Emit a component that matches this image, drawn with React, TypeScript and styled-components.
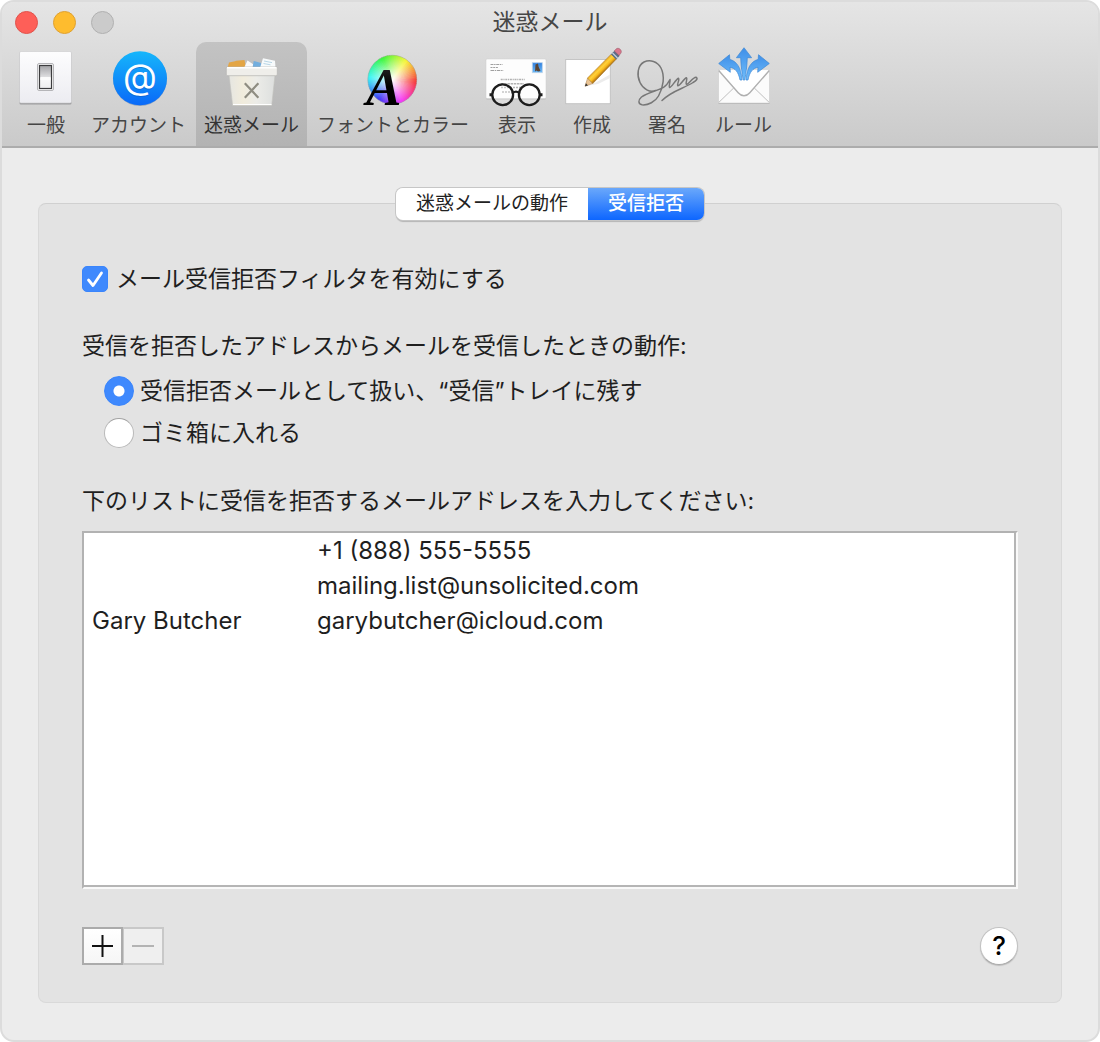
import React, { useState } from "react";
import styled, { createGlobalStyle } from "styled-components";

const GlobalStyle = createGlobalStyle`
  *, *::before, *::after { box-sizing: border-box; }
  body {
    margin: 0;
    background: #fff;
    color: #1f1f1f;
    font-family: Inter, "Noto Sans CJK JP", sans-serif;
    font-size: 23px;
    line-height: 30px;
  }
  button, input { font: inherit; color: inherit; margin: 0; padding: 0; }
`;

const Window = styled.div`
  display: flex;
  flex-direction: column;
  min-height: 100vh;
  border: 2px solid #dcdcdc;
  border-radius: 14px;
  background: #ececec;
  overflow: hidden;
`;

const Header = styled.header`
  background: linear-gradient(#e5e5e5, #cacaca);
  border-bottom: 2px solid #acacac;
`;

const TitleBar = styled.div`
  display: grid;
  grid-template-columns: 1fr auto 1fr;
  align-items: center;
  height: 40px;
  padding: 0 13px;
`;

const Title = styled.h1`
  margin: 0;
  color: #464646;
  font-size: 23px;
  font-weight: 400;
  line-height: 30px;
`;

const TrafficLights = styled.div`
  display: flex;
  gap: 15px;
`;

const TrafficLight = styled.button<{ $fill: string; $edge: string }>`
  width: 23px;
  height: 23px;
  border: 1px solid ${(p) => p.$edge};
  border-radius: 50%;
  background: ${(p) => p.$fill};
`;

const Toolbar = styled.nav`
  display: flex;
  gap: 2px;
  padding: 0 9px;
`;

const ToolButton = styled.button<{ $active?: boolean }>`
  display: flex;
  flex-direction: column;
  align-items: center;
  gap: 7px;
  padding: 5px 8px 8px;
  border: 0;
  border-radius: 10px 10px 0 0;
  background: ${(p) => (p.$active ? "linear-gradient(#c3c3c3, #b3b3b3)" : "none")};
  color: ${(p) => (p.$active ? "#333" : "#454545")};
  font-size: 19px;
  line-height: 24px;
  white-space: nowrap;

  svg { display: block; overflow: visible; }
`;

const Main = styled.main`
  flex: 1;
  display: flex;
  flex-direction: column;
  align-items: stretch;
  padding: 40px 36px 37px;
`;

const Tabs = styled.div`
  z-index: 1;
  display: flex;
  align-self: center;
  margin-bottom: -17px;
  border-radius: 7px;
  box-shadow: 0 0 0 1px #c6c6c6, 0 2px 1px #b4b4b4;
`;

const Tab = styled.button<{ $selected: boolean }>`
  height: 32px;
  padding: 0 20px;
  border: 0;
  background: ${(p) => (p.$selected ? "linear-gradient(#6aa8fb, #0d66ff)" : "#fff")};
  color: ${(p) => (p.$selected ? "#fff" : "#222")};
  font-size: 19px;
  font-weight: ${(p) => (p.$selected ? 500 : 400)};
  line-height: 32px;

  &:first-child { border-radius: 7px 0 0 7px; }
  &:last-child { border-radius: 0 7px 7px 0; }
`;

const Panel = styled.section`
  flex: 1;
  display: flex;
  flex-direction: column;
  padding: 60px 43px 37px;
  border: 1px solid #d9d9d9;
  border-top-color: #d0d0d0;
  border-radius: 8px;
  background: #e3e3e3;
`;

const Option = styled.label<{ $gap: number }>`
  display: flex;
  align-items: center;
  gap: ${(p) => p.$gap}px;
`;

const Mark = styled.span`
  display: grid;
  place-items: center;

  > * { grid-area: 1 / 1; }
  svg { pointer-events: none; }
`;

const CheckInput = styled.input`
  appearance: none;
  width: 26px;
  height: 26px;
  border: 1px solid #b0b0b0;
  border-radius: 5px;
  background: #fff;

  &:checked { border-color: #3a85fc; background: #3f89fd; }
`;

const RadioInput = styled.input`
  appearance: none;
  width: 30px;
  height: 30px;
  border: 1px solid #b9b9b9;
  border-top-color: #a2a2a2;
  border-radius: 50%;
  background: #fff;

  &:checked {
    border-color: #3a85fc;
    background: radial-gradient(circle, #fff 5px, #3f89fd 6px);
  }
`;

const RadioGroup = styled.fieldset`
  display: flex;
  flex-direction: column;
  gap: 12px;
  margin: 37px 0 38px;
  padding: 0 0 0 22px;
  border: 0;
`;

const Legend = styled.legend`
  margin: 0 0 15px -22px;
  padding: 0;
`;

const Caption = styled.p`
  margin: 0 0 15px;
`;

const AddressBox = styled.div`
  flex: 1;
  min-height: 200px;
  border: 2px solid;
  border-color: #b2b2b2 #f9f9f9 #f9f9f9 #b2b2b2;
  background: #fff;
  box-shadow: inset -2px -2px #b5b5b5;
`;

const AddressTable = styled.table`
  width: 100%;
  table-layout: fixed;
  border-collapse: collapse;
  font-size: 24px;

  td { height: 35px; padding: 0 0 0 8px; line-height: 34px; }
  td:first-child { width: 225px; }
`;

const Footer = styled.div`
  display: flex;
  align-items: center;
  justify-content: space-between;
  margin-top: 38px;
`;

const ListButtons = styled.div`
  display: flex;
`;

const ListButton = styled.button`
  display: grid;
  place-items: center;
  width: 41px;
  height: 38px;
  border: 2px solid #ababab;
  background: linear-gradient(#fff, #f6f6f6);
  color: #111;

  &:disabled {
    border-color: #c8c8c8;
    border-left-width: 1px;
    background: #efefef;
    color: #b3b3b3;
  }
`;

const HelpButton = styled.button`
  width: 38px;
  height: 38px;
  border: 1px solid #c2c2c2;
  border-bottom-color: #aaa;
  border-radius: 50%;
  background: #fff;
  box-shadow: 0 1px 1px #bdbdbd;
  color: #000;
  font-size: 26px;
  font-weight: 500;
  line-height: 36px;
`;

function GeneralIcon() {
  return (
    <svg width="54" height="60" aria-hidden="true">
      <defs>
        <linearGradient id="plate" x1="0" y1="0" x2="0" y2="1">
          <stop offset="0" stopColor="#fdfdfe" />
          <stop offset="1" stopColor="#ececf1" />
        </linearGradient>
        <linearGradient id="rocker" x1="0" y1="0" x2="0" y2="1">
          <stop offset="0" stopColor="#a3a3a6" />
          <stop offset="0.48" stopColor="#dcdcde" />
          <stop offset="0.52" stopColor="#fbfbfb" />
          <stop offset="1" stopColor="#ededee" />
        </linearGradient>
      </defs>
      <rect x="0.5" y="5" width="52" height="52.5" rx="1.5" fill="#9b9b9d" />
      <rect x="0.5" y="4.5" width="52" height="51.5" rx="1.5" fill="url(#plate)" stroke="#c9c9cb" strokeWidth="0.6" />
      <rect x="18.5" y="16.5" width="16" height="27" rx="1.5" fill="#f5f5f6" stroke="#b5b5b8" strokeWidth="1" />
      <rect x="20.5" y="18.5" width="12" height="23" fill="url(#rocker)" stroke="#3c3c3e" strokeWidth="1.2" />
      <path d="M21.2 32h10.6" stroke="#fff" strokeWidth="1" />
    </svg>
  );
}

function AccountIcon() {
  return (
    <svg width="55" height="60" aria-hidden="true">
      <defs>
        <linearGradient id="account" x1="0" y1="0" x2="0" y2="1">
          <stop offset="0" stopColor="#16b6fb" />
          <stop offset="1" stopColor="#0a69f8" />
        </linearGradient>
      </defs>
      <circle cx="29" cy="32" r="27" fill="#8fa3bd" />
      <circle cx="29" cy="31.3" r="27" fill="url(#account)" />
      <text x="29" y="42.5" textAnchor="middle" fontFamily="Inter, sans-serif" fontSize="35" fill="#1257b8" opacity="0.5">@</text>
      <text x="29" y="41.5" textAnchor="middle" fontFamily="Inter, sans-serif" fontSize="35" fill="#fff">@</text>
    </svg>
  );
}

function JunkIcon() {
  return (
    <svg width="55" height="60" aria-hidden="true">
      <defs>
        <linearGradient id="bin" x1="0" y1="0" x2="1" y2="0">
          <stop offset="0" stopColor="#e6e6e2" />
          <stop offset="0.3" stopColor="#f1ecdc" />
          <stop offset="0.6" stopColor="#ecece8" />
          <stop offset="1" stopColor="#dddfde" />
        </linearGradient>
      </defs>
      <path d="M3.5 21 5 15.5l6-1.2 1-.6 8.5-.7L22 21z" fill="#e3a544" />
      <path d="m20 21 3.500-7.500 6 4 .5 3.500z" fill="#fafafa" />
      <path d="m28.500 21 1.200-7 7.500 2 .8 5z" fill="#73aede" />
      <path d="m36 21 3-9.700 12 2.400.5 7.300z" fill="#f7fafb" />
      <path d="m40 14 8 1.600M39.500 16.500l7 1.300" stroke="#a7cbe0" strokeWidth="0.8" />
      <path d="M5 28h46l-3.300 30.500H8.700z" fill="url(#bin)" stroke="#c2c2be" strokeWidth="0.6" />
      <path d="M9 57.500h38.500" stroke="#fff" strokeWidth="1.2" />
      <rect x="2.3" y="20" width="51" height="8.7" rx="1.5" fill="#efeeea" stroke="#b5b5b1" strokeWidth="0.7" />
      <path d="M3 20.700h49.600" stroke="#fff" strokeWidth="1.4" />
      <path d="m20.800 36.300 13.600 14.400m0-14.400L20.800 50.700" stroke="#8f8d82" strokeWidth="2.2" />
    </svg>
  );
}

const WHEEL_STEPS = 72;

function wheelWedge(index: number) {
  const step = (Math.PI * 2) / WHEEL_STEPS;
  const from = index * step;
  const to = from + step * 1.4;
  const point = (a: number) => `${27.3 + 24.5 * Math.cos(a)} ${32.7 - 24.5 * Math.sin(a)}`;
  return `M27.3 32.7L${point(from)}A24.5 24.5 0 0 0 ${point(to)}z`;
}

function FontsIcon() {
  return (
    <svg width="56" height="60" aria-hidden="true">
      <defs>
        <radialGradient id="wheelGlow">
          <stop offset="0" stopColor="#fff" />
          <stop offset="0.25" stopColor="#fff" stopOpacity="0.75" />
          <stop offset="0.95" stopColor="#fff" stopOpacity="0.05" />
        </radialGradient>
        <linearGradient id="letter" x1="0" y1="0" x2="0" y2="1">
          <stop offset="0" stopColor="#333" />
          <stop offset="0.5" stopColor="#000" />
        </linearGradient>
      </defs>
      {Array.from({ length: WHEEL_STEPS }, (_, i) => (
        <path key={i} d={wheelWedge(i)} fill={`hsl(${(i * 360) / WHEEL_STEPS + 8} 92% 58%)`} />
      ))}
      <circle cx="27.3" cy="32.7" r="24.5" fill="url(#wheelGlow)" stroke="#999" strokeOpacity="0.5" strokeWidth="0.8" />
      <text x="1" y="57.5" fontFamily="Liberation Serif, serif" fontSize="53" fontStyle="italic" fontWeight="700" fill="url(#letter)">A</text>
    </svg>
  );
}

function ViewingIcon() {
  return (
    <svg width="60" height="60" aria-hidden="true">
      <defs>
        <linearGradient id="stamp" x1="0" y1="0" x2="0" y2="1">
          <stop offset="0" stopColor="#2f7fe0" />
          <stop offset="1" stopColor="#6ab8f5" />
        </linearGradient>
      </defs>
      <rect x="-1" y="12.5" width="60" height="40" rx="1" fill="#b9b9b9" />
      <rect x="-1" y="12" width="60" height="39.5" rx="1" fill="#fdfdfd" stroke="#cfcfcf" strokeWidth="0.5" />
      <g stroke="#a0a0a0" strokeWidth="1">
        <path d="M3.500 17.500h12" strokeDasharray="3 .6 1.500 .6" />
        <path d="M3.500 20.500h8" strokeDasharray="2 .7" />
        <path d="M3.500 23.500h13" strokeDasharray="3.500 .7 1.500 .7" />
      </g>
      <g stroke="#b2b2b2" strokeWidth="1.4">
        <path d="M13.700 32.500h24" strokeDasharray="2 .7 1.200 .7" />
        <path d="M14 36.700h23" strokeDasharray="2.500 .7" />
        <path d="M14 40.500h21M15 45h12" strokeDasharray="2 1" />
      </g>
      <rect x="45.3" y="15.7" width="10" height="10" fill="url(#stamp)" stroke="#bcd3ea" strokeWidth="0.8" />
      <path d="m48.500 17.500 2.500-1 .5 3 2 4.500-2.500.5-1.500-1-1.500 1z" fill="#5b4535" />
      <g fill="#fff" fillOpacity="0.25" stroke="#1d1d1d" strokeWidth="2.3">
        <circle cx="15.7" cy="47.7" r="10.4" />
        <circle cx="42.3" cy="47.7" r="10.4" />
        <path d="M25.500 46.500c1.500-2.600 5.500-2.600 7 0" fill="none" />
      </g>
      <path d="M2.500 46.200h3v3h-3zM52.500 46.200h3v3h-3z" fill="#1d1d1d" />
    </svg>
  );
}

function ComposingIcon() {
  return (
    <svg width="54" height="60" aria-hidden="true">
      <defs>
        <linearGradient id="pencil" gradientUnits="userSpaceOnUse" x1="34" y1="19" x2="39.5" y2="24.5">
          <stop offset="0" stopColor="#e9a520" />
          <stop offset="0.35" stopColor="#ffd23c" />
          <stop offset="0.65" stopColor="#f9b91d" />
          <stop offset="1" stopColor="#a86a12" />
        </linearGradient>
      </defs>
      <rect x="0.7" y="12.5" width="44.6" height="44.2" fill="#fff" stroke="#c0c0c0" strokeWidth="0.9" />
      <path d="m21 39 8-2.500 16-9v3.500l-12 6z" fill="#ececec" />
      <path d="m20 39.300 2.600-8.300 5.300 5.400z" fill="#e9c393" stroke="#a97f4c" strokeWidth="0.5" />
      <path d="m20 39.300.9-3 2.100 2.100z" fill="#333" />
      <path d="M22.500 31 46.200 7.200l5 5L27.800 36.500z" fill="url(#pencil)" stroke="#9a6d1c" strokeWidth="0.5" />
      <path d="m46 7.300 3.500-3.600 5.200 5.100-3.600 3.600z" fill="#5c6e86" />
      <path d="m47.500 6 5 5" stroke="#c4d0dc" strokeWidth="1.2" />
      <path d="m49.300 3.900 1.700-1.800c1.200-1.300 3-1 4.200.2 1.300 1.200 1.500 3 .4 4.200L54 8.500z" fill="#d9788d" stroke="#8f4a5b" strokeWidth="0.5" />
    </svg>
  );
}

function SignatureIcon() {
  return (
    <svg width="60" height="60" aria-hidden="true">
      <path
        d="M18.500 43.500C13 46 6 42 3 35.500C-.5 28 .5 18.500 7 15C13 12 20.500 14.500 24 21C28 29 26.500 40 21.500 49C18.500 54.500 11 58.500 5 57.800C1 57.200 1 53 4.500 50C10 45.800 20 43.800 26.500 40.300C30 38.200 31.500 35.500 33 32.500C33.500 35 31.500 38.500 32.500 40.500C34.500 40.800 38.500 32.500 41.500 31.300C43 32.500 39.500 37.500 40.800 38.800C43 39 46.500 32 49.300 30.800C51 31.500 48 36.500 49.500 37.200C51.500 37.500 55.500 30.500 59 30.300C61.500 31.500 59 34 56 35.500C47 41.500 35 43.500 25 53.500"
        fill="none"
        stroke="#777"
        strokeWidth="1.5"
        strokeLinecap="round"
        strokeLinejoin="round"
      />
    </svg>
  );
}

function RulesIcon() {
  return (
    <svg width="57" height="60" aria-hidden="true">
      <defs>
        <linearGradient id="arrows" x1="0" y1="0" x2="0" y2="1">
          <stop offset="0" stopColor="#3f8fe8" />
          <stop offset="1" stopColor="#6fbdfb" />
        </linearGradient>
      </defs>
      <rect x="3.5" y="23" width="51" height="34" fill="#b4b4b4" />
      <rect x="3.5" y="22.5" width="51" height="33.5" fill="#fbfbfb" stroke="#d0d0d0" strokeWidth="0.6" />
      <path d="m3.700 55.500 15-14.500M54.300 55.500 39.300 41" stroke="#bfbfbf" strokeWidth="1" />
      <path d="m3.700 23.500 19.500 22.300c3.500 4 8.100 4 11.600 0l19.500-22.300" fill="#fff" stroke="#b0b0b0" strokeWidth="1.4" />
      <g fill="url(#arrows)" stroke="#3b86d6" strokeWidth="0.7" strokeLinejoin="round">
        <path d="m29 .7 7.600 10h-4.300c-.3 9-1.300 15-2.500 22.300h-1.600C27 25.700 26 19.700 25.700 10.700h-4.300z" />
        <path d="m3.700 16.500 10.800-8.800.3 4.700c6.500 1.600 11.500 8 12.200 20.600h-2c-1.500-8-5-12-10-12.700l.3 5z" />
        <path d="M54.300 16.500 43.500 7.700l-.3 4.700C36.700 14 31.700 20.400 31 33h2c1.500-8 5-12 10-12.700l-.3 5z" />
      </g>
    </svg>
  );
}

const TOOLS = [
  { label: "一般", Icon: GeneralIcon },
  { label: "アカウント", Icon: AccountIcon },
  { label: "迷惑メール", Icon: JunkIcon },
  { label: "フォントとカラー", Icon: FontsIcon },
  { label: "表示", Icon: ViewingIcon },
  { label: "作成", Icon: ComposingIcon },
  { label: "署名", Icon: SignatureIcon },
  { label: "ルール", Icon: RulesIcon },
];

const TAB_LABELS = ["迷惑メールの動作", "受信拒否"];

const ACTIONS = ["受信拒否メールとして扱い、“受信”トレイに残す", "ゴミ箱に入れる"];

const BLOCKED = [
  { name: "", address: "+1 (888) 555-5555" },
  { name: "", address: "mailing.list@unsolicited.com" },
  { name: "Gary Butcher", address: "garybutcher@icloud.com" },
];

export default function App() {
  const [tool, setTool] = useState(2);
  const [tab, setTab] = useState(1);
  const [enabled, setEnabled] = useState(true);
  const [action, setAction] = useState(0);

  return (
    <>
      <GlobalStyle />
      <Window>
        <Header>
          <TitleBar>
            <TrafficLights>
              <TrafficLight $fill="#fe5f58" $edge="#e0534c" aria-label="閉じる" />
              <TrafficLight $fill="#febc2e" $edge="#dea032" aria-label="しまう" />
              <TrafficLight $fill="#cbcbcb" $edge="#b0b0b0" aria-label="拡大" disabled />
            </TrafficLights>
            <Title>迷惑メール</Title>
          </TitleBar>
          <Toolbar>
            {TOOLS.map(({ label, Icon }, i) => (
              <ToolButton key={label} type="button" $active={i === tool} onClick={() => setTool(i)}>
                <Icon />
                {label}
              </ToolButton>
            ))}
          </Toolbar>
        </Header>
        <Main>
          <Tabs role="tablist">
            {TAB_LABELS.map((label, i) => (
              <Tab key={label} type="button" role="tab" aria-selected={i === tab} $selected={i === tab} onClick={() => setTab(i)}>
                {label}
              </Tab>
            ))}
          </Tabs>
          <Panel>
            <Option $gap={8}>
              <Mark>
                <CheckInput type="checkbox" checked={enabled} onChange={(e) => setEnabled(e.target.checked)} />
                {enabled && (
                  <svg width="26" height="26" aria-hidden="true">
                    <path d="m6.500 14 4.500 5.500L19.500 7" fill="none" stroke="#fff" strokeWidth="2.8" strokeLinecap="round" strokeLinejoin="round" />
                  </svg>
                )}
              </Mark>
              メール受信拒否フィルタを有効にする
            </Option>
            <RadioGroup>
              <Legend>受信を拒否したアドレスからメールを受信したときの動作:</Legend>
              {ACTIONS.map((label, i) => (
                <Option key={label} $gap={6}>
                  <RadioInput type="radio" name="action" checked={i === action} onChange={() => setAction(i)} />
                  {label}
                </Option>
              ))}
            </RadioGroup>
            <Caption>下のリストに受信を拒否するメールアドレスを入力してください:</Caption>
            <AddressBox>
              <AddressTable>
                <tbody>
                  {BLOCKED.map((row) => (
                    <tr key={row.address}>
                      <td>{row.name}</td>
                      <td>{row.address}</td>
                    </tr>
                  ))}
                </tbody>
              </AddressTable>
            </AddressBox>
            <Footer>
              <ListButtons>
                <ListButton type="button" aria-label="追加">
                  <svg width="21" height="22" aria-hidden="true">
                    <path d="M0 11h21M10.500 0v22" stroke="currentColor" strokeWidth="2" />
                  </svg>
                </ListButton>
                <ListButton type="button" aria-label="削除" disabled>
                  <svg width="22" height="22" aria-hidden="true">
                    <path d="M0 11h22" stroke="currentColor" strokeWidth="2" />
                  </svg>
                </ListButton>
              </ListButtons>
              <HelpButton type="button">?</HelpButton>
            </Footer>
          </Panel>
        </Main>
      </Window>
    </>
  );
}
